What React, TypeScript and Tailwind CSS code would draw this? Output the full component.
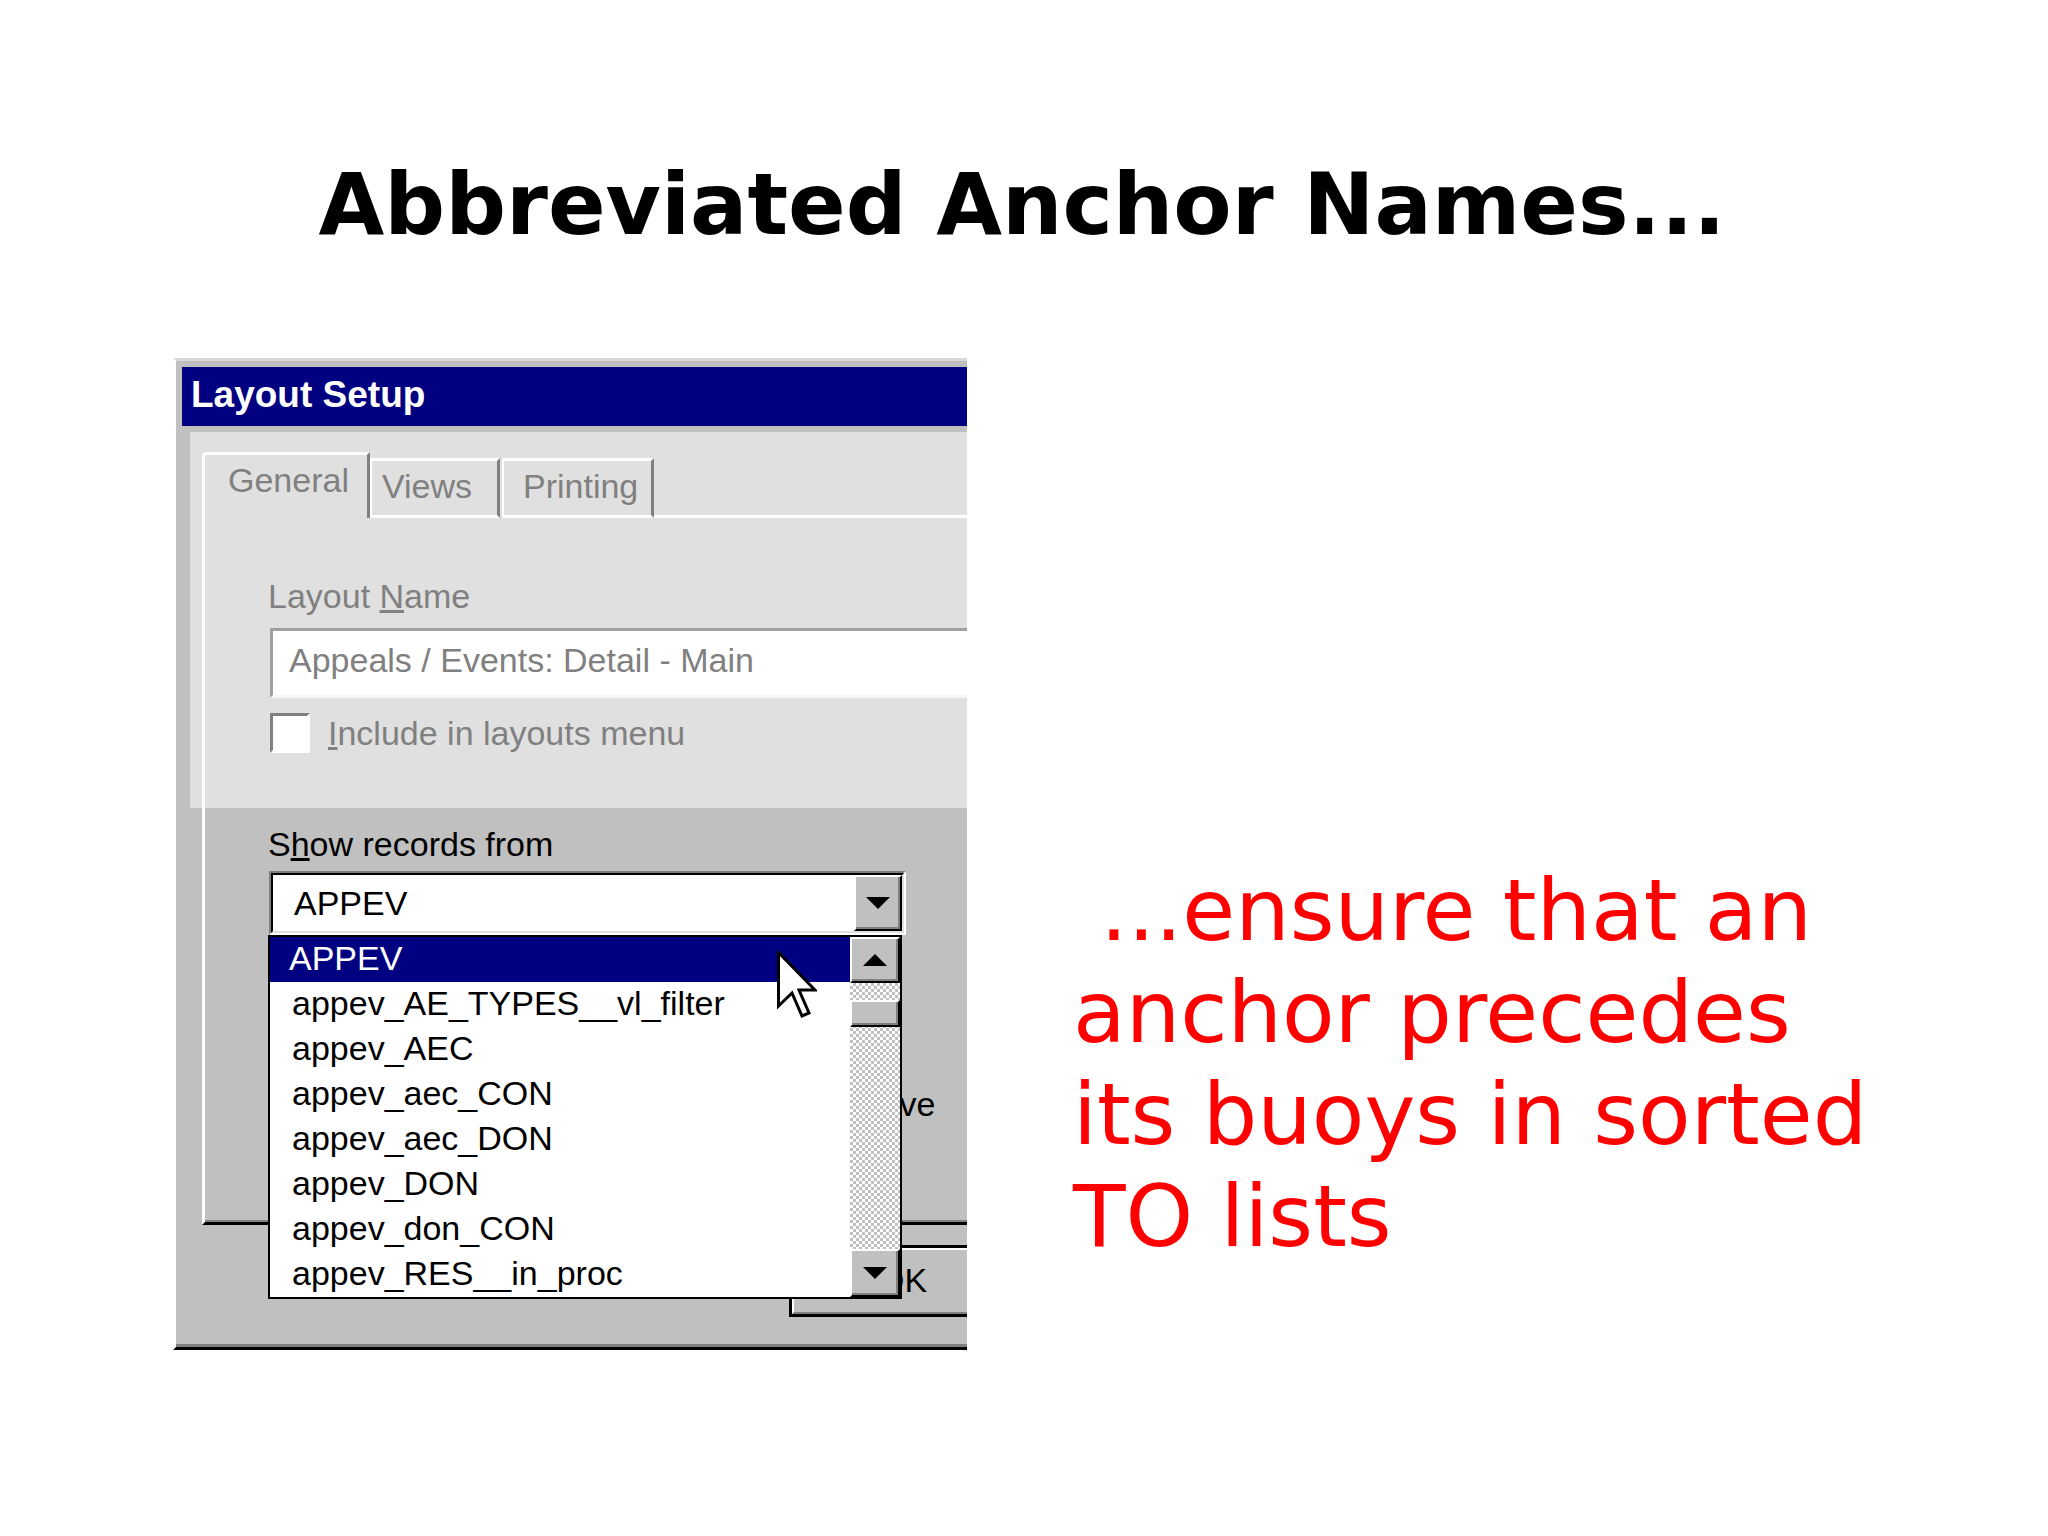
const items = [
  "APPEV",
  "appev_AE_TYPES__vl_filter",
  "appev_AEC",
  "appev_aec_CON",
  "appev_aec_DON",
  "appev_DON",
  "appev_don_CON",
  "appev_RES__in_proc",
];

function DownArrow() {
  return (
    <svg width="24" height="12" viewBox="0 0 24 12">
      <polygon points="0,0 24,0 12,12" fill="#000" />
    </svg>
  );
}

function UpArrow() {
  return (
    <svg width="24" height="12" viewBox="0 0 24 12">
      <polygon points="0,12 24,12 12,0" fill="#000" />
    </svg>
  );
}

function Cursor() {
  return (
    <svg width="40" height="68" viewBox="0 0 40 68" className="absolute left-[507px] top-[14px]">
      <polygon
        points="1.5,1.5 1.5,55 15,42 25,65 32,62 22,39 38,39"
        fill="#fff"
        stroke="#000"
        strokeWidth="3"
        strokeLinejoin="miter"
      />
    </svg>
  );
}

function Scrollbar() {
  const raised =
    "bg-[#c0c0c0] border-t-2 border-l-2 border-t-white border-l-white border-b-2 border-r-2 border-b-black border-r-black shadow-[inset_-2px_-2px_0_#808080]";
  return (
    <div className="flex w-[50px] flex-col">
      <div className={`flex h-[46px] items-center justify-center ${raised}`}>
        <UpArrow />
      </div>
      <div className="flex-1 bg-[repeating-conic-gradient(#c0c0c0_0%_25%,#ffffff_0%_50%)] bg-size-[6px_6px]">
        <div className={`mt-[17px] h-[27px] w-full ${raised}`} />
      </div>
      <div className={`flex h-[48px] items-center justify-center ${raised}`}>
        <DownArrow />
      </div>
    </div>
  );
}

function LayoutSetupDialog() {
  return (
    <div className="ml-[173px] flex h-[992px] w-[794px] shrink-0 flex-col overflow-hidden border-t-[3px] border-l-[3px] border-b-[3px] border-t-[#d8d8d8] border-l-white border-b-black bg-[#c0c0c0] font-['Liberation_Sans',Arial,sans-serif] text-[34px] text-black">
      <div className="flex flex-1 flex-col border-b-[3px] border-b-[#808080] pl-[6px] pt-[6px]">
        {/* Title bar */}
        <div className="flex h-[59px] shrink-0 items-center bg-[#000080] pb-[3px] pl-[9px] text-[37px] font-bold leading-[42px] text-white">
          Layout Setup
        </div>

        <div className="flex flex-1 flex-col">
          {/* faded upper part: tabs, name, checkbox */}
          <div className="ml-[8px] mt-[6px] h-[376px] bg-[#e0e0e0] text-[#808080]">
            <div className="flex items-end pl-[12px] pt-[20px] leading-[40px]">
              <div className="h-[66px] w-[168px] rounded-tl-[4px] border-t-[3px] border-l-[3px] border-r-[3px] border-t-white border-l-white border-r-[#808080] pl-[23px] pt-[5px]">
                General
              </div>
              <div className="h-[60px] w-[130px] border-t-[3px] border-l-2 border-r-[3px] border-b-[3px] border-t-white border-l-white border-r-[#808080] border-b-white pl-[10px] pt-[5px]">
                Views
              </div>
              <div className="ml-[2px] h-[60px] w-[152px] border-t-[3px] border-l-2 border-r-[3px] border-b-[3px] border-t-white border-l-white border-r-[#808080] border-b-white pl-[19px] pt-[5px]">
                Printing
              </div>
              <div className="h-[3px] flex-1 bg-white" />
            </div>

            <div className="ml-[12px] h-[290px] border-l-[3px] border-l-white pl-[63px]">
              <div className="pt-[58px] leading-[40px]">
                Layout <span className="underline">N</span>ame
              </div>
              <div className="ml-[2px] mt-[12px] h-[70px] w-[720px] border-t-[3px] border-l-[3px] border-b-[3px] border-t-[#a0a0a0] border-l-[#a0a0a0] border-b-[#f6f6f6] bg-white pl-[16px] leading-[58px]">
                Appeals / Events: Detail - Main
              </div>
              <div className="ml-[2px] mt-[15px] flex h-[40px] items-center">
                <div className="h-[40px] w-[40px] border-[3px] border-t-[#808080] border-l-[#808080] border-b-white border-r-white bg-white" />
                <div className="ml-[18px] leading-[40px]">
                  <span className="underline">I</span>nclude in layouts menu
                </div>
              </div>
            </div>
          </div>

          {/* lower part of the General panel */}
          <div className="ml-[20px] h-[417px] border-l-[3px] border-b-[3px] border-l-white border-b-black pl-[63px] shadow-[inset_0_-2px_0_#808080]">
            <div className="pt-[16px] leading-[40px]">
              S<span className="underline">h</span>ow records from
            </div>

            <div className="relative ml-[1px] mt-[7px] h-[64px] w-[637px]">
              <div className="h-full w-full border-2 border-t-[#808080] border-l-[#808080] border-b-white border-r-white">
                <div className="flex h-full items-center border-2 border-t-black border-l-black border-b-[#dfdfdf] border-r-[#dfdfdf] bg-white">
                  <div className="flex-1 pl-[21px] leading-[40px]">APPEV</div>
                  <div className="flex h-full w-[48px] items-center justify-center border-t-2 border-l-2 border-b-2 border-r-2 border-t-white border-l-white border-b-black border-r-black bg-[#c0c0c0] shadow-[inset_-2px_-2px_0_#808080]">
                    <DownArrow />
                  </div>
                </div>
              </div>

              {/* open dropdown list */}
              <div className="absolute -left-[1px] top-[64px] z-10 flex h-[364px] w-[634px] border-2 border-black bg-white">
                <div className="relative flex-1">
                  {items.map((item, i) => (
                    <div
                      key={item}
                      className={
                        i === 0
                          ? "h-[45px] bg-[#000080] pl-[19px] leading-[43px] text-white"
                          : "h-[45px] pl-[22px] leading-[43px] text-black"
                      }
                    >
                      {item}
                    </div>
                  ))}
                  <Cursor />
                </div>
                <Scrollbar />
              </div>
            </div>

            <div className="ml-[590px] mt-[149px] leading-[40px]">Save</div>
          </div>

          {/* default button, mostly hidden by the list */}
          <div className="ml-[607px] mt-[20px] h-[72px] w-[240px] border-[3px] border-black">
            <div className="h-full border-2 border-t-white border-l-white border-b-[#808080] border-r-[#808080] pl-[84px] pt-[10px] leading-[40px]">
              OK
            </div>
          </div>
        </div>
      </div>
    </div>
  );
}

export default function App() {
  return (
    <div className="h-[1536px] w-[2048px] overflow-hidden bg-white">
      <h1 className="pr-[4px] pt-[162px] text-center font-['DejaVu_Sans',Verdana,sans-serif] text-[85px] font-bold leading-none text-black">
        Abbreviated Anchor Names...
      </h1>

      <div className="mt-[111px] flex items-start">
        <LayoutSetupDialog />

        <div className="ml-[106px] mt-[501px] whitespace-pre font-['DejaVu_Sans',Verdana,sans-serif] text-[86px] leading-[102px] text-[#ff0000]">
          <div> ...ensure that an</div>
          <div>anchor precedes</div>
          <div>its buoys in sorted</div>
          <div>TO lists</div>
        </div>
      </div>
    </div>
  );
}
